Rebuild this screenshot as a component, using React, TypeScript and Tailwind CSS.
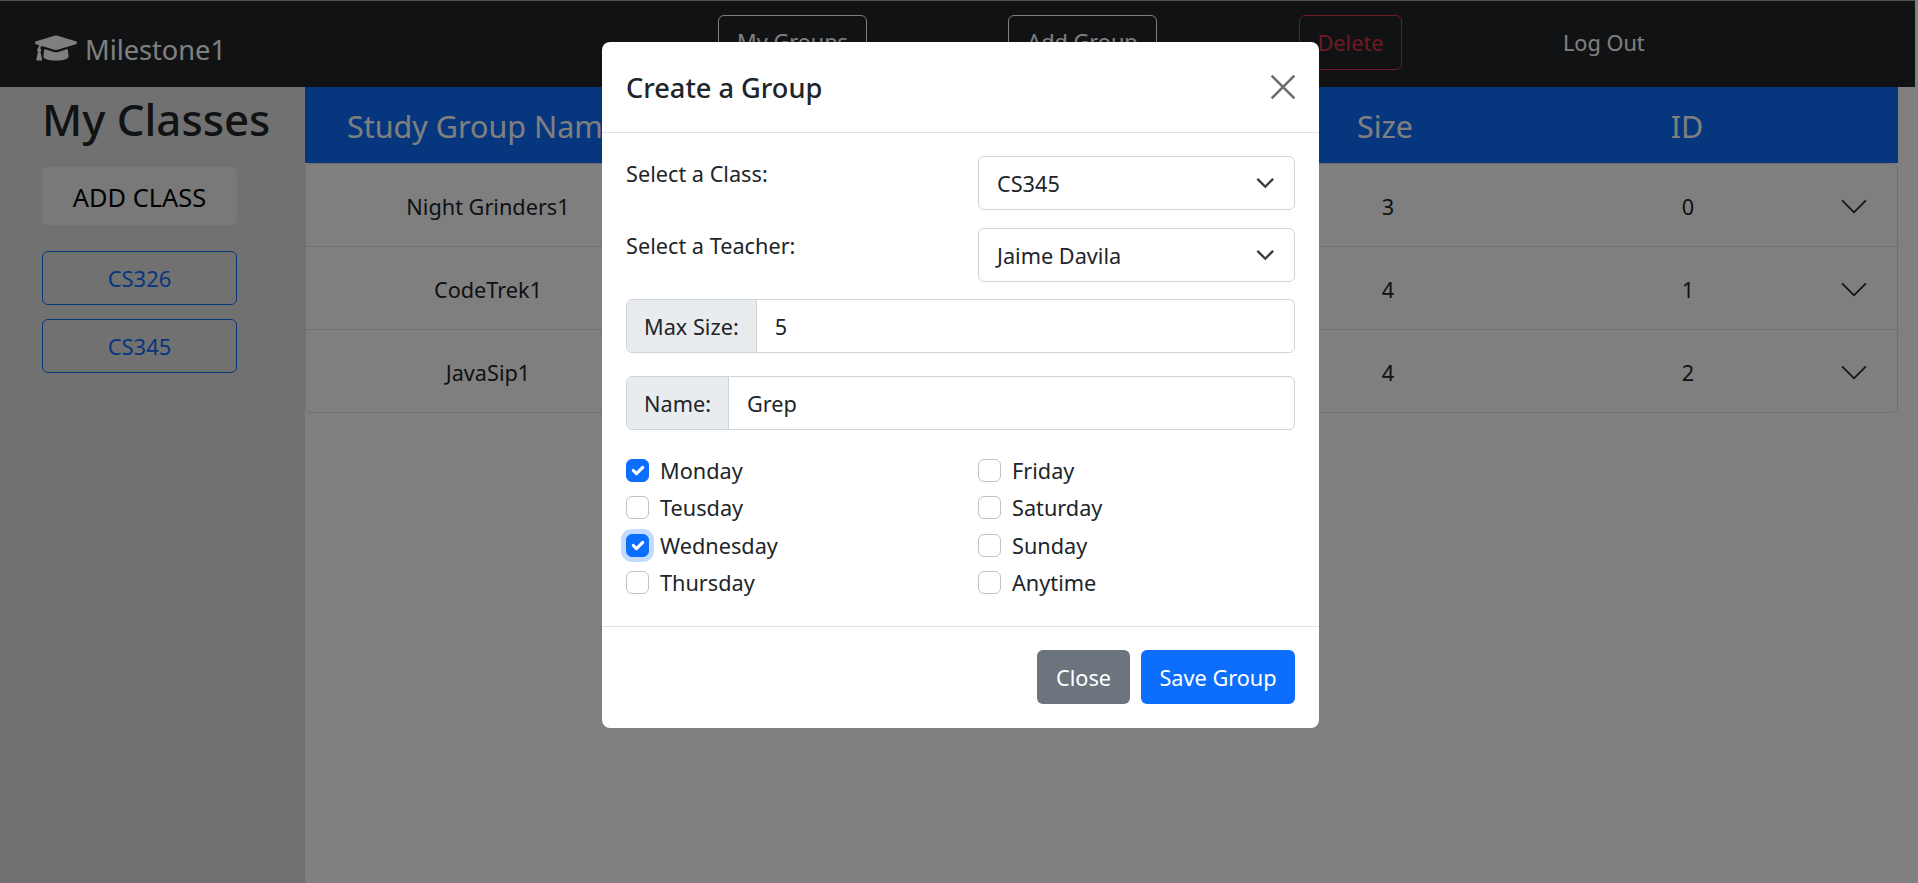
import { FaGraduationCap } from 'react-icons/fa'

const FONT = "font-['Noto_Sans',sans-serif]"

const rows = [
  { name: 'Night Grinders1', size: 3, id: 0 },
  { name: 'CodeTrek1', size: 4, id: 1 },
  { name: 'JavaSip1', size: 4, id: 2 },
]

const leftDays = [
  { label: 'Monday', checked: true },
  { label: 'Teusday' },
  { label: 'Wednesday', checked: true, focused: true },
  { label: 'Thursday' },
]
const rightDays = [{ label: 'Friday' }, { label: 'Saturday' }, { label: 'Sunday' }, { label: 'Anytime' }]

function Chevron({ className }: { className: string }) {
  return (
    <svg viewBox="0 0 16 16" className={className} fill="none" stroke="currentColor">
      <path d="M1.2 4.2 8 11 14.8 4.2" strokeWidth="1" />
    </svg>
  )
}

function Day({ label, checked, focused }: { label: string; checked?: boolean; focused?: boolean }) {
  return (
    <div className="flex h-[37.33px] items-center gap-[11px]">
      <span
        className={`flex h-[23px] w-[23px] shrink-0 items-center justify-center rounded-[6px] border ${
          checked ? 'border-[#0d6efd] bg-[#0d6efd]' : 'border-[#bfc3c7] bg-white'
        } ${focused ? 'shadow-[0_0_0_5px_rgba(13,110,253,0.25)]' : ''}`}
      >
        {checked && (
          <svg viewBox="0 0 20 20" className="h-[21px] w-[21px]" fill="none" stroke="#fff">
            <path d="m6 10 3 3 6-6" strokeWidth="3" strokeLinecap="round" strokeLinejoin="round" />
          </svg>
        )}
      </span>
      <span className="pt-px">{label}</span>
    </div>
  )
}

function SelectBox({ value }: { value: string }) {
  return (
    <div className="flex h-[54px] w-[317px] items-center justify-between rounded-[6px] border border-[#ced4da] pl-[18px] pr-[20px]">
      <span className="pt-[3px]">{value}</span>
      <Chevron className="h-[18.5px] w-[18.5px] text-[#343a40] [&_path]:[stroke-width:2]" />
    </div>
  )
}

function InputGroup({ label, value }: { label: string; value: string }) {
  return (
    <div className="flex h-[54px] overflow-hidden rounded-[6px] border border-[#ced4da]">
      <div className="flex items-center border-r border-[#ced4da] bg-[#e9ecef] px-[17px] pt-[2px]">{label}</div>
      <div className="flex flex-1 items-center px-[18px] pt-[2px]">{value}</div>
    </div>
  )
}

export default function App() {
  return (
    <div className={`${FONT} relative h-[883px] w-[1918px] overflow-hidden bg-white text-[21.7px] text-[#212529]`}>
      <nav className="flex h-[87px] w-[1915px] items-center border-t border-[#a0a0a0] bg-[#212529] text-white">
        <div className="ml-[35px] flex w-[683px] items-center gap-[8px]">
          <FaGraduationCap className="mt-[8px] h-[42px] w-[42px]" />
          <span className="mt-[12px] text-[27.2px]">Milestone1</span>
        </div>
        <button className="mb-[3px] h-[55px] w-[149px] rounded-[6px] border border-white">My Groups</button>
        <button className="mb-[3px] ml-[141px] h-[55px] w-[149px] rounded-[6px] border border-white">Add Group</button>
        <button className="mb-[3px] ml-[142px] h-[55px] w-[103px] rounded-[6px] border border-[#dc3545] pt-[2px] text-[#dc3545]">Delete</button>
        <span className="mb-[2px] ml-[161px]">Log Out</span>
      </nav>
      <div className="flex h-[796px]">
        <aside className="w-[305px] bg-[#e2e2e2] pl-[42px] pr-[68px]">
          <h1 className="h-[60px] pt-[2px] text-[43.8px] leading-[60px] font-medium whitespace-nowrap">My Classes</h1>
          <button className="mt-[20px] block h-[58px] w-[195px] rounded-[6px] bg-[#f2f3f3] pt-[2px] text-[25.4px] text-black">ADD CLASS</button>
          <button className="mt-[26px] block h-[54px] w-[195px] rounded-[6px] border border-[#0d6efd] text-[22px] text-[#0d6efd]">CS326</button>
          <button className="mt-[14px] block h-[54px] w-[195px] rounded-[6px] border border-[#0d6efd] text-[22px] text-[#0d6efd]">CS345</button>
        </aside>
        <main className="w-[1593px]">
          <div className="flex h-[76px] items-center bg-[#0d6efd] pt-[3px] text-[30.5px] text-white">
            <span className="ml-[42px] w-[888px] shrink-0 whitespace-nowrap">Study Group Name</span>
            <span className="w-[300px] shrink-0 text-center">Size</span>
            <span className="ml-[2px] w-[300px] shrink-0 text-center">ID</span>
          </div>
          <div className="rounded-[6px] border border-[#dfdfdf]">
            {rows.map((row) => (
              <div key={row.id} className="flex h-[83px] items-center border-b border-[#dfdfdf] pt-[3px] last:h-[82px] last:border-b-0">
                <span className="w-[364px] pt-px text-center">{row.name}</span>
                <span className="ml-[568px] w-[300px] pt-px text-center">{row.size}</span>
                <span className="w-[300px] pt-px text-center">{row.id}</span>
                <Chevron className="ml-[2px] h-[28px] w-[28px]" />
              </div>
            ))}
          </div>
        </main>
      </div>

      <div className="absolute inset-0 bg-black/50" />

      <div className="absolute left-[602px] top-[42px] w-[717px] rounded-[8px] bg-white">
        <div className="flex h-[91px] items-center justify-between border-b border-[#dee2e6] pl-[24px] pr-[23px]">
          <h5 className="pt-[2px] text-[27.2px] font-medium">Create a Group</h5>
          <svg viewBox="0 0 16 16" className="h-[26px] w-[26px] text-[#6c6c6c]" fill="none" stroke="currentColor">
            <path d="M1 1 15 15M15 1 1 15" strokeWidth="1.6" />
          </svg>
        </div>
        <div className="px-[24px] pt-[23px]">
          <div className="flex justify-between">
            <span className="pt-[2px]">Select a Class:</span>
            <SelectBox value="CS345" />
          </div>
          <div className="mt-[18px] flex justify-between">
            <span className="pt-[2px]">Select a Teacher:</span>
            <SelectBox value="Jaime Davila" />
          </div>
          <div className="mt-[17px]">
            <InputGroup label="Max Size:" value="5" />
          </div>
          <div className="mt-[23px]">
            <InputGroup label="Name:" value="Grep" />
          </div>
          <div className="mt-[22px] flex pb-[25px]">
            <div className="w-[352px]">
              {leftDays.map((d) => (
                <Day key={d.label} {...d} />
              ))}
            </div>
            <div>
              {rightDays.map((d) => (
                <Day key={d.label} {...d} />
              ))}
            </div>
          </div>
        </div>
        <div className="flex h-[102px] items-center justify-end gap-[11px] border-t border-[#dee2e6] px-[24px] pb-[1px]">
          <button className="h-[54px] w-[93px] rounded-[6px] bg-[#6c757d] pt-px text-white">Close</button>
          <button className="h-[54px] w-[154px] rounded-[6px] bg-[#0d6efd] pt-px text-white">Save Group</button>
        </div>
      </div>
    </div>
  )
}
